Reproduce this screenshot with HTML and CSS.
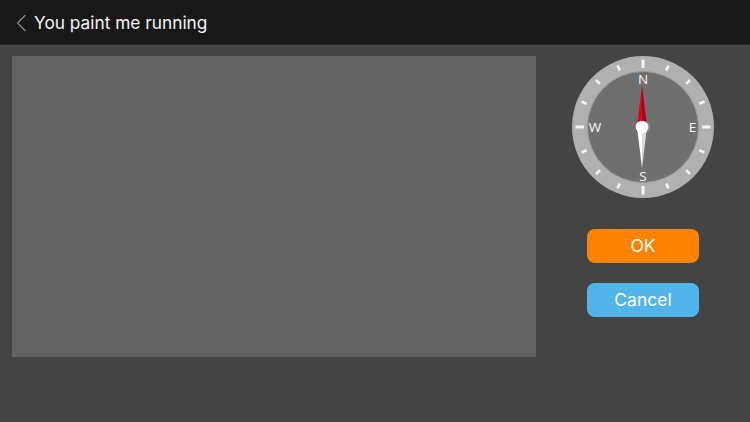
FILE: index.html
```html
<!DOCTYPE html>
<html lang="en">
<head>
<meta charset="utf-8">
<title>You paint me running</title>
<link rel="stylesheet" href="styles.css">
</head>
<body>
<div class="app">
  <header class="topbar">
    <svg class="back" width="12" height="20" viewBox="0 0 12 20"><path d="M10.500 3 2.500 11l8 8" fill="none" stroke="#8c8c8c" stroke-width="1.200"/></svg>
    <h1 class="title">You paint me running</h1>
  </header>
  <main class="content">
    <div class="canvas"></div>
    <aside class="side">
      <svg class="compass" width="144" height="144" viewBox="-72 -72 144 144">
        <defs>
          <linearGradient id="red" x1="0" x2="1" y1="0" y2="0">
            <stop offset="0.5" stop-color="#e0001b"/><stop offset="0.5" stop-color="#a80013"/>
          </linearGradient>
          <linearGradient id="white" x1="0" x2="1" y1="0" y2="0">
            <stop offset="0.5" stop-color="#ffffff"/><stop offset="0.5" stop-color="#dcdcdc"/>
          </linearGradient>
        </defs>
        <circle r="71" fill="#b0b0b0"/>
        <circle r="55.500" fill="#6f6f6f" stroke="#9a9a9a" stroke-width="1"/>
        <g stroke="#f4f4f4" stroke-linecap="butt">
          <path stroke-width="3" d="M0-67.500V-59M0 67.500V59M-67.500 0H-59M67.500 0H59"/>
          <path stroke-width="2.600" d="M25.500-61.500 23.300-56.400M47-47 43.100-43.100M61.500-25.500 56.400-23.300M61.500 25.500 56.400 23.300M47 47 43.100 43.100M25.500 61.500 23.300 56.400M-25.500-61.500-23.300-56.400M-47-47-43.100-43.100M-61.500-25.500-56.400-23.300M-61.500 25.500-56.400 23.300M-47 47-43.100 43.100M-25.500 61.500-23.300 56.400"/>
        </g>
        <g class="letters" text-anchor="middle">
          <text x="0" y="-43">N</text>
          <text x="0" y="54">S</text>
          <text x="49.500" y="5">E</text>
          <text x="-48" y="5">W</text>
        </g>
        <circle cx="1.500" r="6" fill="#8a8a8a"/>
        <g class="needle">
          <path d="M0-42-5 0H5Z" fill="url(#red)"/>
          <path d="M0 41-5 0H5Z" fill="url(#white)"/>
          <circle r="6.300" fill="#fff"/>
        </g>
      </svg>
      <button class="btn btn-ok" type="button">OK</button>
      <button class="btn btn-cancel" type="button">Cancel</button>
    </aside>
  </main>
</div>
</body>
</html>
```
FILE: styles.css
```css
* { box-sizing: border-box; }
html, body { margin: 0; padding: 0; }
body { width: 750px; height: 422px; overflow: hidden; background: #444444; font-family: "Inter", "Liberation Sans", sans-serif; }
.app { display: flex; flex-direction: column; height: 422px; }
.topbar { flex: none; height: 45px; display: flex; align-items: center; gap: 7px; padding-left: 15px; background: #181818; border-bottom: 1px solid #2a2a2a; }
.back { display: block; flex: none; }
.title { margin: 1px 0 0; font-size: 17.300px; font-weight: 400; color: #f4f4f4; line-height: 1; }
.content { flex: 1; display: flex; align-items: flex-start; padding: 11px 0 0 12px; }
.canvas { flex: none; width: 524px; height: 301px; background: #636363; }
.side { flex: 1; display: flex; flex-direction: column; align-items: center; }
.compass { display: block; flex: none; margin-top: -1px; margin-bottom: 30px; }
.needle { transform: translateX(-1px); }
.letters { font-family: "Open Sans", "Liberation Sans", sans-serif; font-size: 13.500px; fill: #f8f8f8; }
.btn { display: block; width: 112px; height: 34px; padding: 0 0 1px; border: 0; border-radius: 8px; color: #fff; font-family: "Inter", "Liberation Sans", sans-serif; font-size: 17.500px; }
.btn-ok { background: #ff8200; margin-bottom: 20px; }
.btn-cancel { background: #52b5e9; }
```
